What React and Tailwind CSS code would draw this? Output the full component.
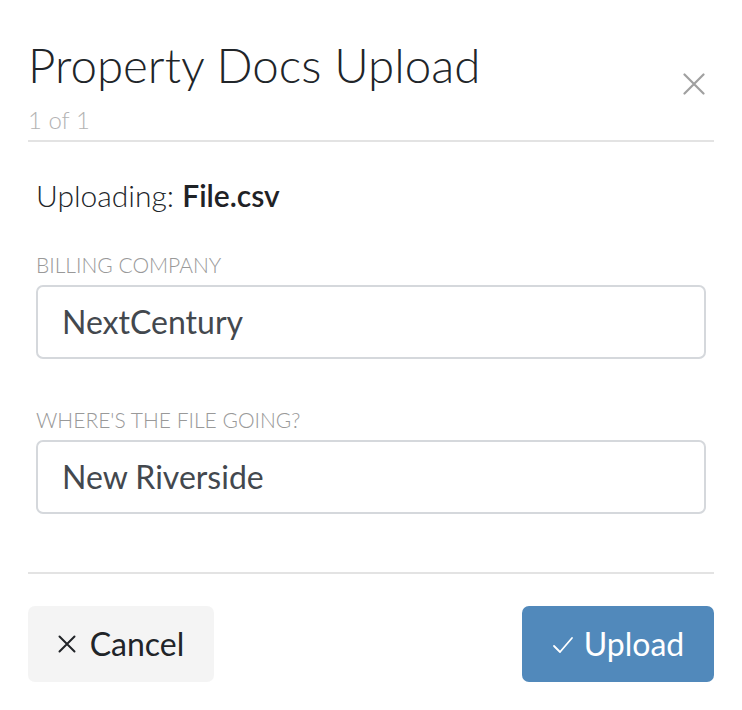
import React from "react";

export default function App() {
  return (
    <div className="w-[742px] h-[710px] bg-white px-[28px] font-['Lato',sans-serif]">
      <div className="flex items-start justify-between pt-[37px]">
        <div>
          <h1 className="text-[47.5px] leading-[56px] font-light text-[#212529]">
            Property Docs Upload
          </h1>
          <div className="mt-[13px] text-[24px] leading-[28px] font-light text-[#b3b3b3]">1 of 1</div>
        </div>
        <button className="mt-[36px] mr-[9px] w-[22px] h-[22px] text-[#a0a0a0]">
          <svg viewBox="0 0 22 22" width="22" height="22" fill="none" stroke="currentColor" strokeWidth="2.2" strokeLinecap="round">
            <path d="M1.5 1.5 L20.5 20.5 M20.5 1.5 L1.5 20.5" />
          </svg>
        </button>
      </div>
      <div className="mt-[6px] h-[2px] bg-[#e3e3e3]" />
      <div className="px-[8px] pt-[35px]">
        <div className="text-[30px] leading-[36px] font-light text-[#212529]">
          Uploading: <span className="font-semibold text-[#1f2226]">File.csv</span>
        </div>
        <div className="mt-[40px] text-[21px] leading-[24px] font-light text-[#999999] uppercase">Billing Company</div>
        <div className="mt-[8px] h-[74px] rounded-[7px] border-2 border-[#d5d8dc] flex items-center px-[24px] text-[32px] leading-[38px] text-[#43484e]">
          NextCentury
        </div>
        <div className="mt-[49px] text-[21px] leading-[24px] font-light text-[#999999] uppercase">Where's the file going?</div>
        <div className="mt-[8px] h-[74px] rounded-[7px] border-2 border-[#d5d8dc] flex items-center px-[24px] text-[32px] leading-[38px] text-[#43484e]">
          New Riverside
        </div>
      </div>
      <div className="mt-[58px] h-[2px] bg-[#e3e3e3]" />
      <div className="mt-[32px] flex justify-between">
        <button className="w-[186px] h-[76px] rounded-[7px] bg-[#f4f4f4] flex items-center justify-center gap-[14px] text-[32px] leading-[38px] text-[#212428]">
          <svg viewBox="0 0 18 18" width="18" height="18" fill="none" stroke="currentColor" strokeWidth="2" strokeLinecap="round">
            <path d="M1.5 1.5 L16.5 16.5 M16.5 1.5 L1.5 16.5" />
          </svg>
          <span>Cancel</span>
        </button>
        <button className="w-[192px] h-[76px] rounded-[7px] bg-[#5189bb] flex items-center justify-center gap-[10px] text-[32px] leading-[38px] text-white">
          <svg viewBox="0 0 22 18" width="22" height="18" className="mt-[2px]" fill="none" stroke="currentColor" strokeWidth="1.8" strokeLinecap="round" strokeLinejoin="round">
            <path d="M2 10 L8 16 L20 2" />
          </svg>
          <span>Upload</span>
        </button>
      </div>
    </div>
  );
}
